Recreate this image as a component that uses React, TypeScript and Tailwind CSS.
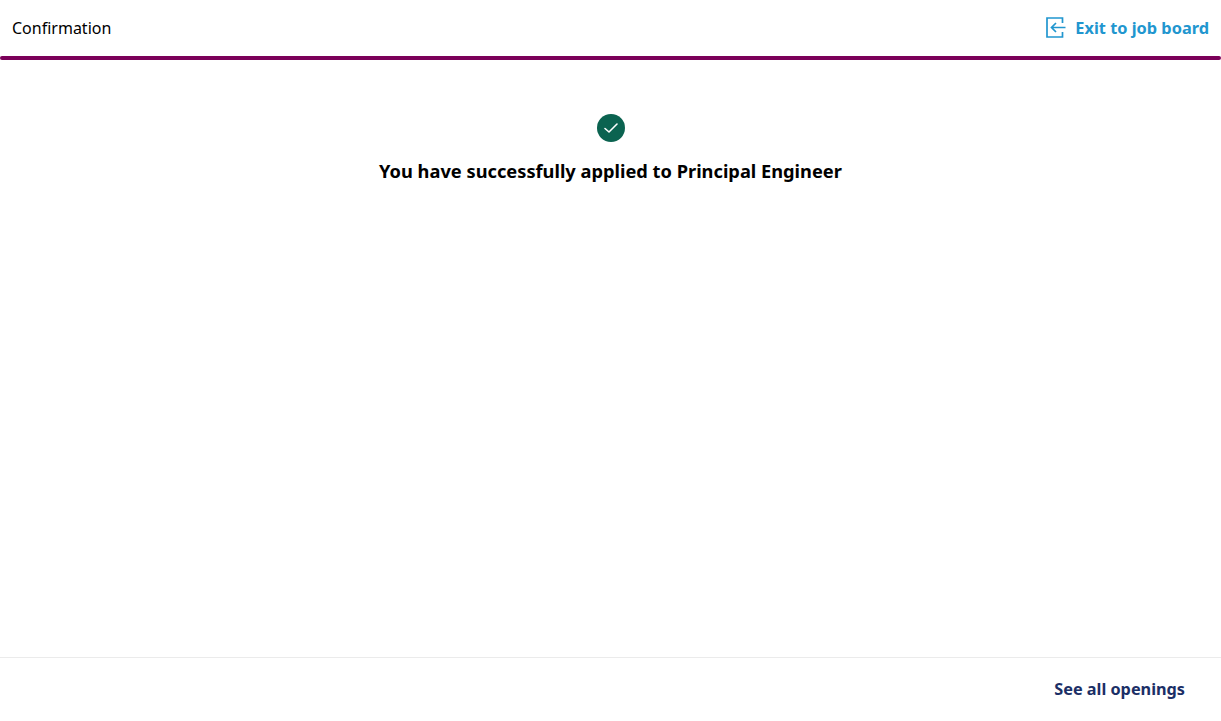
import React from 'react';

const ExitIcon = () => (
  <svg width="20" height="21" viewBox="0 0 20 21" fill="none" stroke="#2196cf" strokeWidth="1.7">
    <path d="M16.5 6V1H1V20H16.5V15" />
    <path d="M19.5 10.5H5.5M10 6L5.5 10.5L10 15" />
  </svg>
);

export default function App() {
  return (
    <div className="flex h-[721px] flex-col bg-white font-['Noto_Sans',sans-serif] text-black">
      <header className="flex h-14 items-center justify-between px-3">
        <span className="text-[16px]">Confirmation</span>
        <a className="flex items-center gap-[9px] text-[16.35px] font-bold text-[#2196cf]">
          <ExitIcon />
          Exit to job board
        </a>
      </header>
      <div className="h-1 rounded-full bg-[#7b0059]" />
      <main className="flex flex-1 flex-col items-center pt-[54px]">
        <div className="flex h-7 w-7 items-center justify-center rounded-full bg-[#0b6350]">
          <svg width="16" height="16" viewBox="0 0 16 16" fill="none" stroke="#fff" strokeWidth="1.6" strokeLinecap="round" strokeLinejoin="round">
            <path d="M2 8.5L6 12L14 4" />
          </svg>
        </div>
        <h1 className="mt-[15px] text-[18.25px] font-bold">You have successfully applied to Principal Engineer</h1>
      </main>
      <footer className="flex h-[64px] items-center justify-end border-t border-[#ebebeb] pr-9">
        <a className="text-[16.25px] font-bold text-[#1b2f66]">See all openings</a>
      </footer>
    </div>
  );
}
